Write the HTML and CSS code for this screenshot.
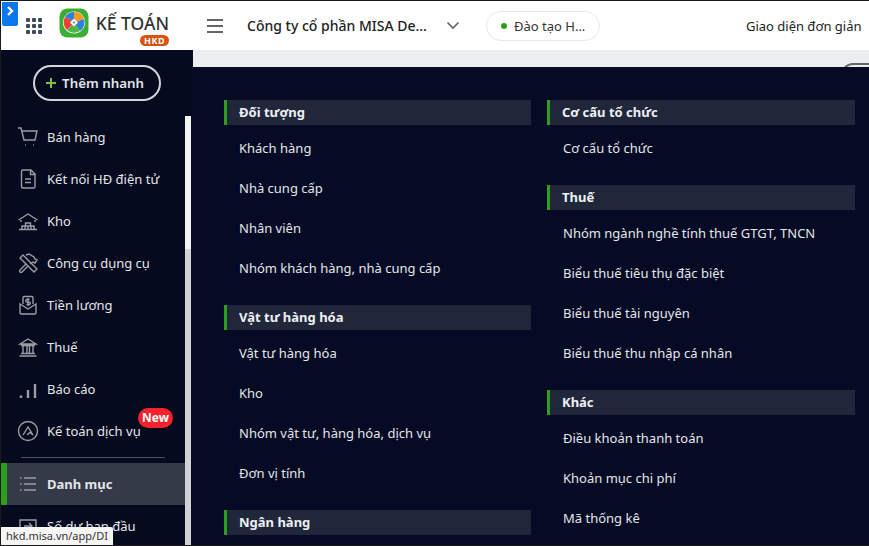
FILE: index.html
```html
<!DOCTYPE html>
<html lang="vi">
<head>
  <meta charset="UTF-8">
  <meta name="viewport" content="width=device-width, initial-scale=1.0">
  <title>Kế toán HKD</title>
  <link rel="stylesheet" href="styles.css">
</head>
<body>
  <div class="corner-tab">
    <svg width="10" height="12" viewBox="0 0 10 12"><path d="M3 2l4 4-4 4" fill="none" stroke="#fff" stroke-width="2.4"/></svg>
  </div>

  <header class="topbar">
    <div class="apps-grid">
      <span></span><span></span><span></span>
      <span></span><span></span><span></span>
      <span></span><span></span><span></span>
    </div>
    <svg class="logo" width="30" height="30" viewBox="0 0 30 30">
      <rect x="0.5" y="0.5" width="29" height="29" rx="8" fill="#3aad32"/>
      <circle cx="15" cy="14.5" r="11" fill="#fff"/>
      <path d="M15 14.500L6 9A10.500 10.500 0 0 1 15 4Z" fill="#2f7fd8"/>
      <path d="M15 4A10.500 10.500 0 0 1 25 11L15 14.500Z" fill="#f59a1c"/>
      <path d="M25 11A10.500 10.500 0 0 1 21 23L15 14.500Z" fill="#2f7fd8"/>
      <path d="M21 23A10.500 10.500 0 0 1 8 22L15 14.500Z" fill="#4fb748"/>
      <path d="M8 22A10.500 10.500 0 0 1 6 9L15 14.500Z" fill="#ee3e36"/>
      <path d="M15 10.500l4 4-4 4-4-4Z" fill="#fff"/>
      <path d="M15 13l1.500 1.500-1.500 1.500-1.500-1.500Z" fill="#8a8f98"/>
    </svg>
    <div class="brand">
      <div class="brand-name">KẾ TOÁN</div>
      <div class="brand-tag">HKD</div>
    </div>
    <div class="hamburger"><span></span><span></span><span></span></div>
    <div class="company">Công ty cổ phần MISA De...</div>
    <svg class="chevron" width="14" height="9" viewBox="0 0 14 9"><path d="M1.500 1.500L7 7l5.500-5.500" fill="none" stroke="#666" stroke-width="1.700"/></svg>
    <div class="env-pill"><i></i>Đào tạo H...</div>
    <div class="simple-view">Giao diện đơn giản</div>
  </header>

  <div class="main">
    <aside class="sidebar">
      <div class="side-inner">
        <div class="quick-wrap">
          <button class="quick-add">
            <svg width="10" height="10" viewBox="0 0 10 10"><path d="M5 0v10M0 5h10" stroke="#7cc242" stroke-width="2"/></svg>
            Thêm nhanh
          </button>
        </div>
        <div class="side-row">
          <ul class="menu">
            <li>
              <svg viewBox="0 0 22 22"><path d="M1 2h3l3 12h11l2-9H5M8 19h.8M16 19h.8" /></svg>
              Bán hàng
            </li>
            <li>
              <svg viewBox="0 0 22 22"><path d="M4.500 3.500a1.500 1.500 0 0 1 1.500-1.500h8l4 4v12.500a1.500 1.500 0 0 1-1.500 1.500h-10.500a1.500 1.500 0 0 1-1.500-1.500ZM13.500 2v4.500h4.500M8 11h6M8 14.500h6" /></svg>
              Kết nối HĐ điện tử
            </li>
            <li>
              <svg viewBox="0 0 22 22"><path d="M1.500 10L11 4l9.500 6M4 12V10M18 12V10M2 19.500h18M5 19v-3h12v3M8.500 16v-3h5v3M11 16v3M8 16v3M14 16v3" /></svg>
              Kho
            </li>
            <li>
              <svg viewBox="0 0 22 22"><path d="M3 6l3-3 14 14-3 3ZM9 3l3-1 5 3 1 2 2 1-2 3-2-1-3 2M3 18l6-6 2 2-6 6a1.400 1.400 0 0 1-2-2Z" /></svg>
              Công cụ dụng cụ
            </li>
            <li>
              <svg viewBox="0 0 22 22"><path d="M6 10V4a1.500 1.500 0 0 1 1.500-1.500h7A1.500 1.500 0 0 1 16 4v6M3 10v8.500a1.500 1.500 0 0 0 1.500 1.500h13a1.500 1.500 0 0 0 1.500-1.500V10l-8 5ZM12.500 5.500H10a1 1 0 0 0 0 2.500h2a1 1 0 0 1 0 2.500H9.500M11 4v8" /></svg>
              Tiền lương
            </li>
            <li>
              <svg viewBox="0 0 22 22"><path d="M3 8L11 3l8 5ZM4 9.500h14M6 10v7M10 10v7M12.500 10v7M16 10v7M4 17.500h14M2.500 20h17" /></svg>
              Thuế
            </li>
            <li>
              <svg viewBox="0 0 22 22"><path class="thick" d="M4 20v-2.500M11 20v-8M18 20V6" /></svg>
              Báo cáo
            </li>
            <li class="has-badge">
              <svg viewBox="0 0 22 22"><circle cx="11" cy="11" r="9.500"/><path d="M6 15l5-8 5 8-3-2.500-3 2.500" /></svg>
              Kế toán dịch vụ
              <span class="badge-new">New</span>
            </li>
            <li class="menu-divider"></li>
            <li class="active">
              <svg viewBox="0 0 22 22"><path d="M3 5h1.500M7 5h12M3 11h1.500M7 11h12M3 17h1.500M7 17h12" /></svg>
              Danh mục
            </li>
            <li>
              <svg viewBox="0 0 22 22"><path d="M3 5h16v13H3ZM7 11h8M12 8l3 3-3 3" /></svg>
              Số dư ban đầu
            </li>
          </ul>
          <div class="scrollbar"><div class="scroll-track"></div></div>
        </div>
      </div>
    </aside>

    <main class="content">
      <div class="content-band"><div class="peek-box"></div></div>
      <div class="panel">
        <div class="panel-col">
          <section class="group">
            <h3>Đối tượng</h3>
            <ul>
              <li>Khách hàng</li>
              <li>Nhà cung cấp</li>
              <li>Nhân viên</li>
              <li>Nhóm khách hàng, nhà cung cấp</li>
            </ul>
          </section>
          <section class="group">
            <h3>Vật tư hàng hóa</h3>
            <ul>
              <li>Vật tư hàng hóa</li>
              <li>Kho</li>
              <li>Nhóm vật tư, hàng hóa, dịch vụ</li>
              <li>Đơn vị tính</li>
            </ul>
          </section>
          <section class="group">
            <h3>Ngân hàng</h3>
          </section>
        </div>
        <div class="panel-col">
          <section class="group">
            <h3>Cơ cấu tổ chức</h3>
            <ul>
              <li>Cơ cấu tổ chức</li>
            </ul>
          </section>
          <section class="group">
            <h3>Thuế</h3>
            <ul>
              <li>Nhóm ngành nghề tính thuế GTGT, TNCN</li>
              <li>Biểu thuế tiêu thụ đặc biệt</li>
              <li>Biểu thuế tài nguyên</li>
              <li>Biểu thuế thu nhập cá nhân</li>
            </ul>
          </section>
          <section class="group">
            <h3>Khác</h3>
            <ul>
              <li>Điều khoản thanh toán</li>
              <li>Khoản mục chi phí</li>
              <li>Mã thống kê</li>
            </ul>
          </section>
        </div>
      </div>
    </main>
  </div>

  <div class="status-tip">hkd.misa.vn/app/DI</div>
</body>
</html>
```

FILE: styles.css
```css
* {
  box-sizing: border-box;
}
html, body {
  margin: 0;
  height: 100%;
}
body {
  position: relative;
  height: 546px;
  padding: 1px 0 1px 1px;
  overflow: hidden;
  background-color: #1a1a1a;
  font-family: 'Noto Sans', sans-serif;
  font-size: 13px;
  color: #222;
  display: flex;
  flex-direction: column;
}
ul {
  list-style: none;
  margin: 0;
  padding: 0;
}

.corner-tab {
  position: absolute;
  top: 2px;
  left: 2px;
  width: 16px;
  height: 24px;
  background-color: #0b78ee;
  border-radius: 0 0 2px 2px;
  padding: 3px 0 0 3px;
}
.corner-tab svg {
  display: block;
}

/* top bar */
.topbar {
  height: 49px;
  flex: none;
  background-color: #fff;
  display: flex;
  align-items: center;
}
.apps-grid {
  margin-left: 25px;
  width: 16px;
  display: grid;
  grid-template-columns: repeat(3, 4px);
  gap: 2px;
  margin-top: 0;
}
.apps-grid span {
  height: 4px;
  background-color: #3e4a60;
  border-radius: 1px;
}
.logo {
  margin-left: 17px;
  margin-top: -5px;
}
.brand {
  margin-left: 7px;
  width: 73px;
  height: 35px;
  display: flex;
  flex-direction: column;
  align-items: flex-end;
  margin-top: 8px;
}
.brand-name {
  font-size: 17.500px;
  line-height: 23px;
  font-weight: 500;
  color: #333;
  white-space: nowrap;
}
.brand-tag {
  width: 29px;
  height: 11px;
  background-color: #d9520f;
  border-radius: 6px;
  color: #fff;
  font-size: 9px;
  font-weight: 700;
  line-height: 11px;
  text-align: center;
  letter-spacing: 0.5px;
}
.hamburger {
  margin-left: 38px;
  width: 16px;
  display: flex;
  flex-direction: column;
  gap: 4px;
}
.hamburger span {
  height: 2px;
  background-color: #666;
}
.company {
  margin-left: 24px;
  width: 187px;
  font-size: 14px;
  font-weight: 500;
  white-space: nowrap;
}
.chevron {
  margin-left: 12px;
}
.env-pill {
  margin-left: 26px;
  width: 114px;
  height: 30px;
  border: 1px solid #e8e8e8;
  border-radius: 15px;
  padding-left: 14px;
  display: flex;
  align-items: center;
  font-size: 13px;
  color: #333;
}
.env-pill i {
  width: 6px;
  height: 6px;
  border-radius: 50%;
  background-color: #2ca01c;
  margin-right: 7px;
}
.simple-view {
  margin-left: auto;
  margin-right: 7.500px;
  font-size: 13px;
  color: #222;
  white-space: nowrap;
}

/* main */
.main {
  flex: 1;
  min-height: 0;
  display: flex;
}
.sidebar {
  width: 192px;
  flex: none;
  background-color: #050a1e;
  overflow: hidden;
}
.side-inner {
  height: 100%;
  display: flex;
  flex-direction: column;
}
.quick-wrap {
  height: 66px;
  flex: none;
  padding: 15px 0 0 32px;
}
.quick-add {
  width: 128px;
  height: 36px;
  border: 2px solid #d3d5da;
  border-radius: 18px;
  background: none;
  color: #e3e5ea;
  font-family: inherit;
  font-size: 13.300px;
  font-weight: 600;
  padding: 0 4px 0 0;
  display: flex;
  align-items: center;
  justify-content: center;
  gap: 6px;
}
.side-row {
  flex: 1;
  min-height: 0;
  display: flex;
}
.menu {
  width: 184px;
  flex: none;
}
.menu li {
  height: 42px;
  padding-left: 16px;
  display: flex;
  align-items: center;
  color: #e4e6ea;
  white-space: nowrap;
  position: relative;
}
.menu li svg {
  width: 22px;
  height: 22px;
  margin-right: 8px;
  flex: none;
  fill: none;
  stroke: #9b9da4;
  stroke-width: 1.400;
}
.menu li svg .thick {
  stroke-width: 2.400;
}
.menu li.menu-divider {
  height: 11px;
  padding: 0;
  margin-bottom: 0;
}
.menu li.menu-divider::after {
  content: "";
  width: 144px;
  height: 1px;
  margin-left: 20px;
  background-color: #4a4e5c;
}
.menu li.active {
  background-color: #343a48;
  border-left: 6px solid #2ca01c;
  padding-left: 10px;
  font-weight: 700;
}
.badge-new {
  position: absolute;
  top: -2px;
  left: 137px;
  width: 35px;
  height: 20px;
  border-radius: 10px;
  background-color: #f5222d;
  color: #fff;
  font-size: 12px;
  font-weight: 700;
  line-height: 20px;
  text-align: center;
}
.scrollbar {
  width: 6px;
  flex: none;
  background-color: #d0d2d8;
}
.scroll-track {
  height: 133px;
  background-color: #f3f3f3;
}

/* catalog panel */
.content {
  flex: 1;
  min-width: 0;
  display: flex;
  flex-direction: column;
}
.content-band {
  height: 17px;
  flex: none;
  background-color: #ecedf0;
  position: relative;
  overflow: hidden;
}
.peek-box {
  position: absolute;
  top: 13px;
  right: -18px;
  width: 46px;
  height: 30px;
  border: 2px solid #666;
  border-radius: 12px;
}
.panel {
  flex: 1;
  min-height: 0;
  overflow: hidden;
  background-color: #050b24;
  padding: 33px 14px 0 31px;
  display: grid;
  grid-template-columns: 307px 308px;
  column-gap: 16px;
}
.group {
  margin-bottom: 17px;
}
.group h3 {
  margin: 0;
  height: 25px;
  padding-left: 12px;
  border-left: 3px solid #2ca01c;
  background-color: #20273b;
  color: #eef0f4;
  font-size: 13px;
  font-weight: 700;
  line-height: 25px;
}
.group ul {
  margin-top: 3px;
}
.group li {
  height: 40px;
  padding-left: 15px;
  display: flex;
  align-items: center;
  color: #e4e6ea;
  font-size: 13px;
}
.panel-col + .panel-col li {
  padding-left: 16px;
}

.status-tip {
  position: absolute;
  left: 1px;
  bottom: 1px;
  height: 18px;
  padding: 0 5px;
  background-color: #f6f6f6;
  color: #333;
  font-size: 11px;
  line-height: 18px;
  border-radius: 0 2px 0 0;
}
```
